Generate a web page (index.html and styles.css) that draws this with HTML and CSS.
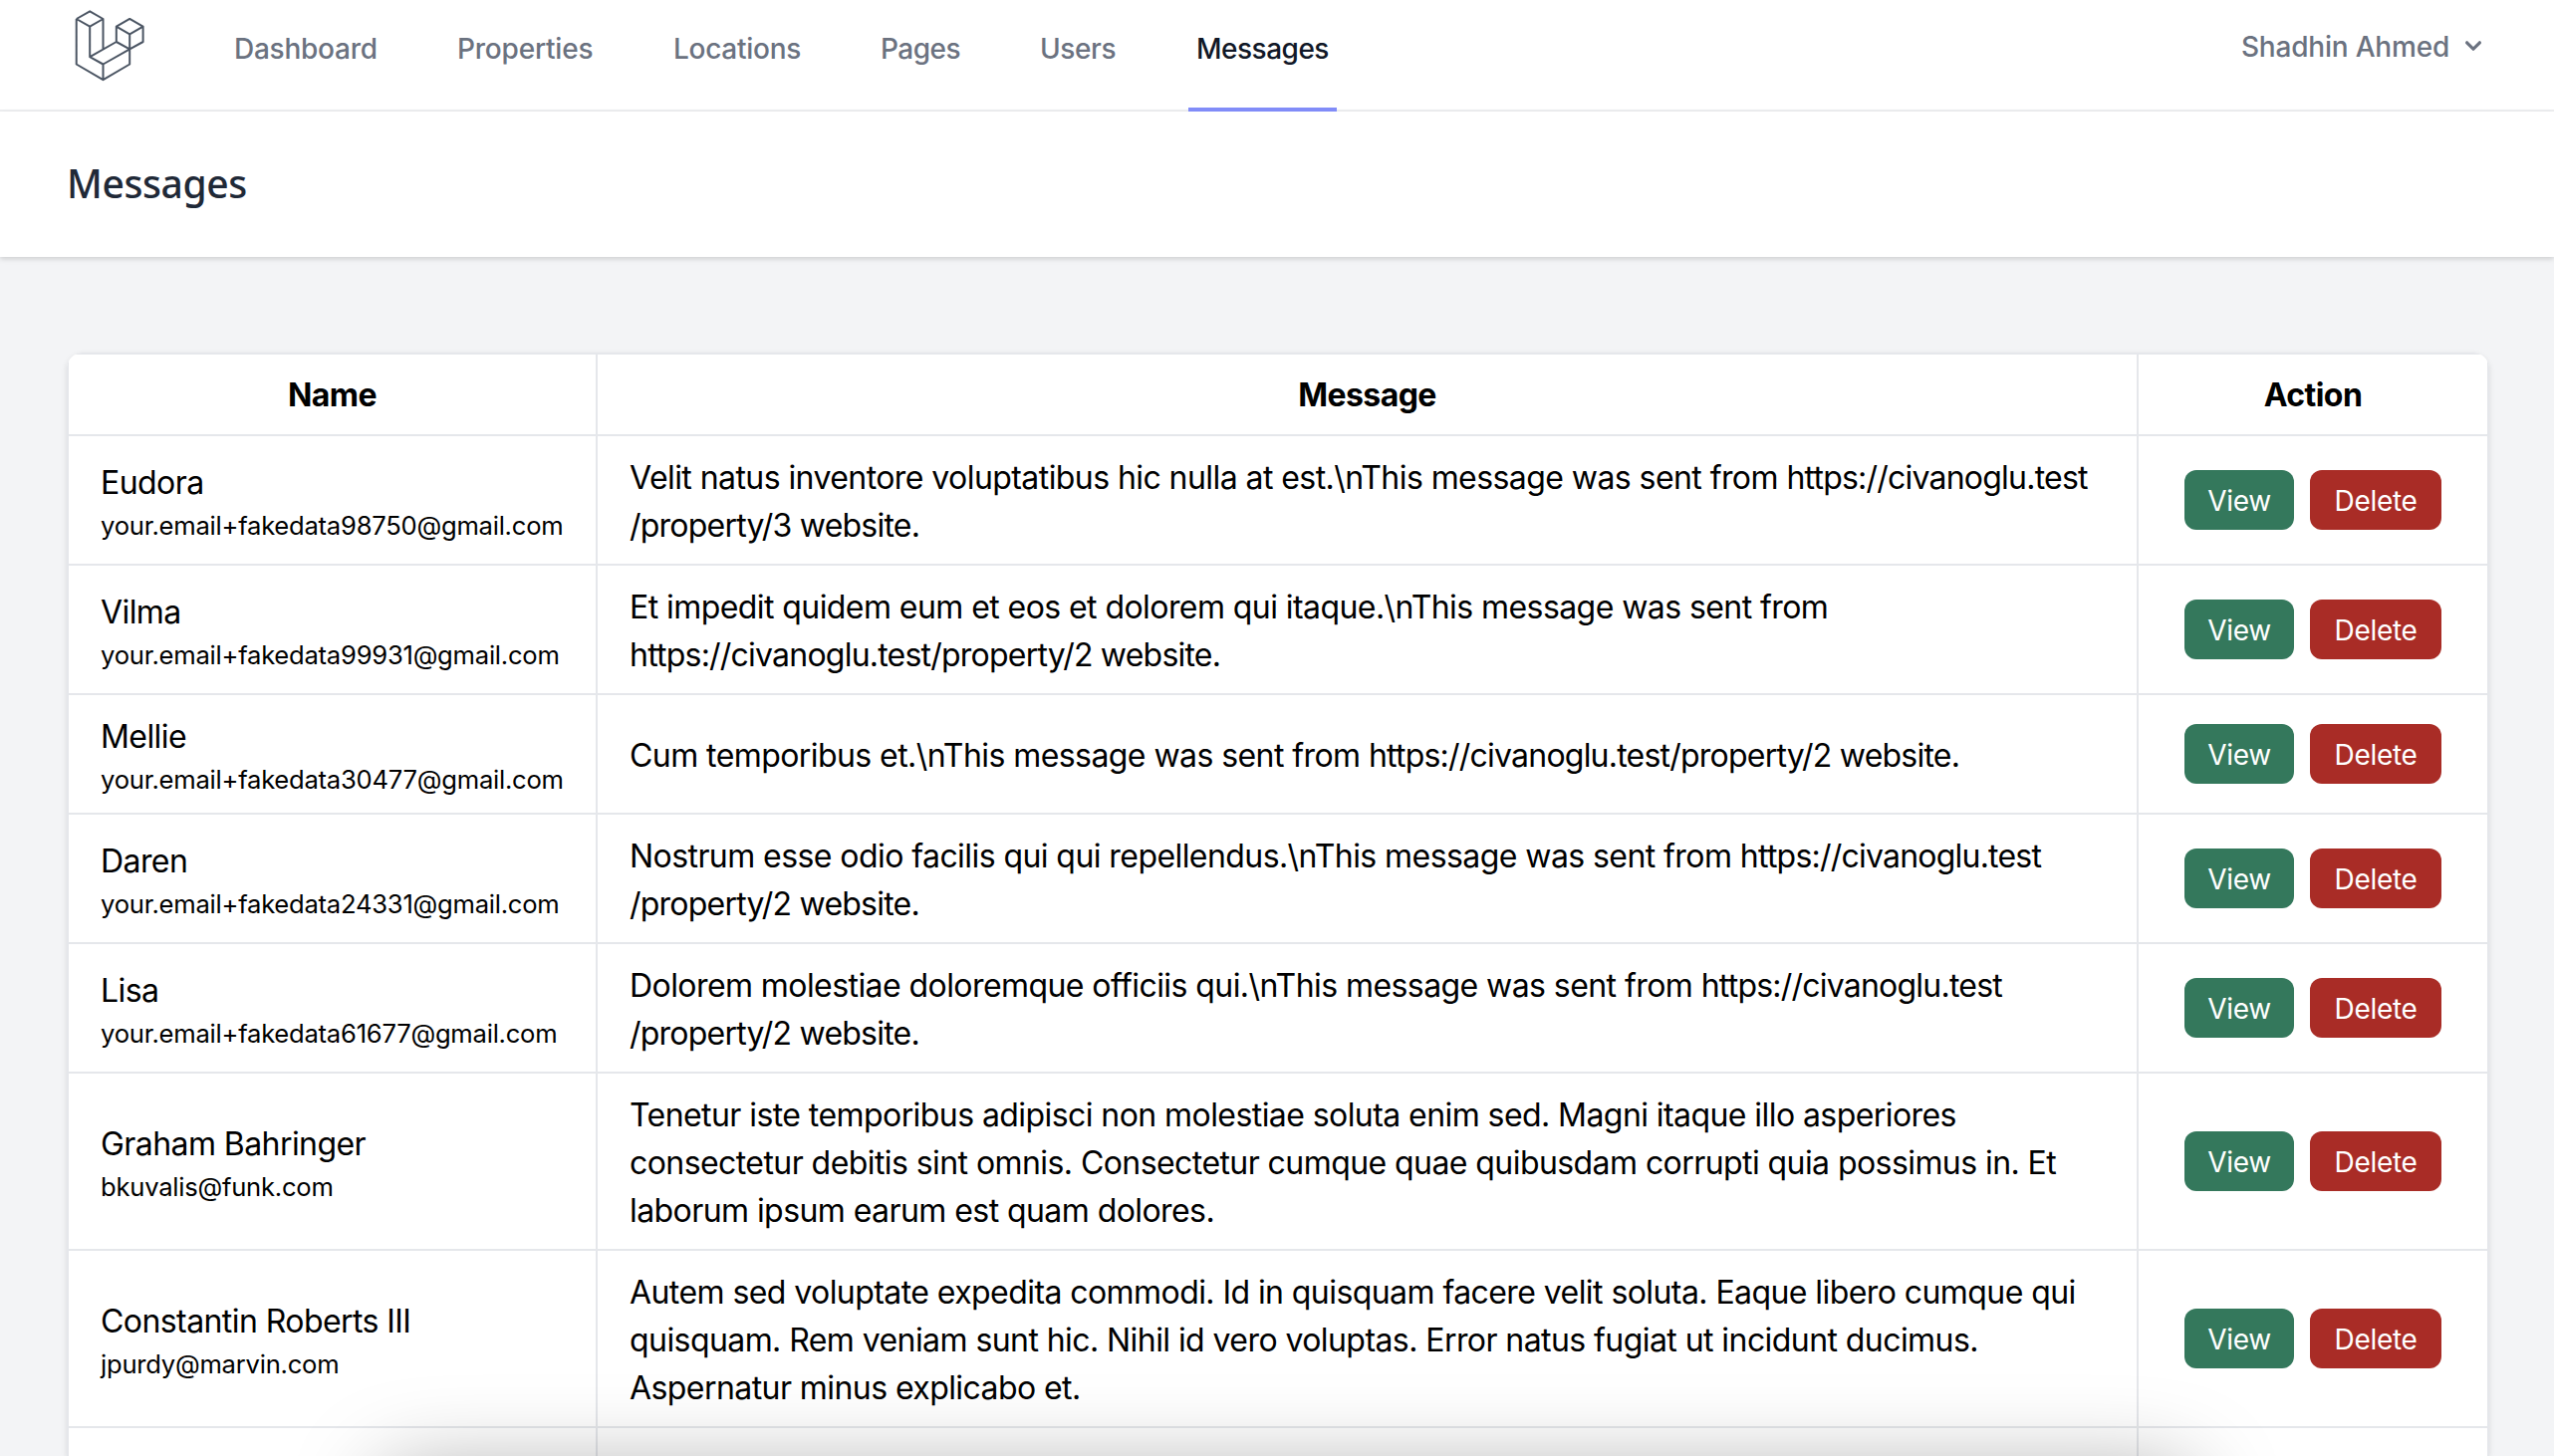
FILE: index.html
```html
<!DOCTYPE html>
<html lang="en">
<head>
<meta charset="utf-8">
<title>Messages</title>
<link rel="stylesheet" href="styles.css">
</head>
<body>
<nav class="nav">
  <a class="logo" href="#" aria-label="Home">
    <svg viewBox="0 0 72 72" fill="none" stroke="#4b5563" stroke-width="2" stroke-linejoin="round">
      <path d="M2.700 9 16.200 1.300 29.500 9V39.300M2.700 9V54.500L29.500 70.200 56.200 54.500V39.300M2.700 9 16.200 16.700 29.500 9M16.200 16.700V47.200L29.500 54.500 56.200 39.300 42.800 32 16.200 47.200M29.500 54.500V70.200M42.800 32V16.600L56.200 8.900 69.600 16.600V32L56.200 39.300V24.300L42.800 16.600M56.200 24.300 69.600 16.600"/>
    </svg>
  </a>
  <div class="links">
    <a class="link dashboard" href="#">Dashboard</a>
    <a class="link properties" href="#">Properties</a>
    <a class="link locations" href="#">Locations</a>
    <a class="link pages" href="#">Pages</a>
    <a class="link users" href="#">Users</a>
    <a class="link messages active" href="#">Messages</a>
  </div>
  <button class="user"><span>Shadhin Ahmed</span>
    <svg viewBox="0 0 20 20" fill="currentColor"><path fill-rule="evenodd" d="M5.293 7.293a1 1 0 011.414 0L10 10.586l3.293-3.293a1 1 0 111.414 1.414l-4 4a1 1 0 01-1.414 0l-4-4a1 1 0 010-1.414z" clip-rule="evenodd"/></svg>
  </button>
</nav>
<header class="header"><h2>Messages</h2></header>
<main class="main">
  <div class="card">
    <table class="table">
      <colgroup><col class="c-name"><col class="c-msg"><col class="c-act"></colgroup>
      <thead><tr><th>Name</th><th>Message</th><th>Action</th></tr></thead>
      <tbody>
        <tr><td><div class="name">Eudora</div><div class="email">your.email+fakedata98750@gmail.com</div></td>
          <td class="msg">Velit natus inventore voluptatibus hic nulla at est.\nThis message was sent from <span class="url">https://civanoglu.test<br>/property/3 website.</span></td>
          <td><div class="actions"><a class="btn view">View</a><a class="btn delete">Delete</a></div></td></tr>
        <tr><td><div class="name">Vilma</div><div class="email">your.email+fakedata99931@gmail.com</div></td>
          <td class="msg">Et impedit quidem eum et eos et dolorem qui itaque.\nThis message was sent from<br><span class="url">https://civanoglu.test/property/2 website.</span></td>
          <td><div class="actions"><a class="btn view">View</a><a class="btn delete">Delete</a></div></td></tr>
        <tr><td><div class="name">Mellie</div><div class="email">your.email+fakedata30477@gmail.com</div></td>
          <td class="msg">Cum temporibus et.\nThis message was sent from <span class="url">https://civanoglu.test/property/2 website.</span></td>
          <td><div class="actions"><a class="btn view">View</a><a class="btn delete">Delete</a></div></td></tr>
        <tr><td><div class="name">Daren</div><div class="email">your.email+fakedata24331@gmail.com</div></td>
          <td class="msg">Nostrum esse odio facilis qui qui repellendus.\nThis message was sent from <span class="url">https://civanoglu.test<br>/property/2 website.</span></td>
          <td><div class="actions"><a class="btn view">View</a><a class="btn delete">Delete</a></div></td></tr>
        <tr><td><div class="name">Lisa</div><div class="email">your.email+fakedata61677@gmail.com</div></td>
          <td class="msg">Dolorem molestiae doloremque officiis qui.\nThis message was sent from <span class="url">https://civanoglu.test<br>/property/2 website.</span></td>
          <td><div class="actions"><a class="btn view">View</a><a class="btn delete">Delete</a></div></td></tr>
        <tr><td><div class="name">Graham Bahringer</div><div class="email">bkuvalis@funk.com</div></td>
          <td class="msg">Tenetur iste temporibus adipisci non molestiae soluta enim sed. Magni itaque illo asperiores<br>consectetur debitis sint omnis. Consectetur cumque quae quibusdam corrupti quia possimus in. Et<br>laborum ipsum earum est quam dolores.</td>
          <td><div class="actions"><a class="btn view">View</a><a class="btn delete">Delete</a></div></td></tr>
        <tr><td><div class="name">Constantin Roberts III</div><div class="email">jpurdy@marvin.com</div></td>
          <td class="msg">Autem sed voluptate expedita commodi. Id in quisquam facere velit soluta. Eaque libero cumque qui<br>quisquam. Rem veniam sunt hic. Nihil id vero voluptas. Error natus fugiat ut incidunt ducimus.<br>Aspernatur minus explicabo et.</td>
          <td><div class="actions"><a class="btn view">View</a><a class="btn delete">Delete</a></div></td></tr>
        <tr class="next"><td></td><td></td><td></td></tr>
      </tbody>
    </table>
  </div>
</main>
<div class="window-shadow"></div>
</body>
</html>
```
FILE: styles.css
```css
* { box-sizing: border-box; }
html { overflow: hidden; }
body {
  margin: 0;
  height: 1462px;
  overflow: hidden;
  position: relative;
  background: #f3f4f6;
  color: #000;
  font: 32px/48px Inter, "Liberation Sans", sans-serif;
}
a { color: inherit; text-decoration: none; }
.nav {
  display: flex;
  height: 112px;
  padding: 0 65px 0 74px;
  background: #fff;
  border-bottom: 2px solid #eeeff1;
}
.logo { width: 72px; height: 72px; margin-top: 10px; }
.logo svg { display: block; width: 72px; height: 72px; }
.links { display: flex; gap: 64px; margin-left: 81px; height: 112px; }
.link {
  height: 112px;
  padding: 28px 0 0 8px;
  font-size: 28px;
  line-height: 43px;
  font-weight: 500;
  color: #6b7280;
  border-bottom: 4px solid transparent;
  white-space: nowrap;
}
.dashboard { width: 160px; letter-spacing: -.25px; }
.properties { width: 153px; letter-spacing: -.2px; }
.locations { width: 144px; letter-spacing: -.27px; }
.pages { width: 96px; letter-spacing: -.5px; }
.users { width: 93px; letter-spacing: -.4px; }
.messages { width: 149px; letter-spacing: -.5px; }
.link.active { color: #111827; border-color: #818cf8; }
.user {
  display: flex;
  align-items: center;
  gap: 8px;
  height: 40px;
  margin: 27px 0 0 auto;
  padding: 0;
  border: 0;
  background: none;
  color: #6b7280;
  font: 500 28px/40px Inter, "Liberation Sans", sans-serif;
  letter-spacing: -.2px;
}
.user svg { width: 32px; height: 32px; margin-top: -2px; }
.header {
  height: 146px;
  padding: 47px 67px;
  background: #fff;
  box-shadow: 0 2px 6px rgba(0,0,0,.1), 0 2px 4px rgba(0,0,0,.06);
}
.header h2 {
  margin: 0;
  font: 500 39px/50px "Noto Sans", "Open Sans", sans-serif;
  letter-spacing: -.4px;
  color: #1f2937;
}
.main { height: 1204px; padding: 96px 65px 0 67px; overflow: hidden; }
.card {
  height: 1108px;
  border-radius: 16px 16px 0 0;
  overflow: hidden;
  background: #fff;
  box-shadow: 0 2px 6px rgba(0,0,0,.1);
}
.table { width: 2432px; table-layout: fixed; border-collapse: collapse; }
.c-name { width: 531px; }
.c-msg { width: 1547px; }
.c-act { width: 352px; }
th, td {
  border: 2px solid #e5e7eb;
  padding: 18px 32px 14px;
  vertical-align: middle;
  text-align: left;
  letter-spacing: -.57px;
}
td:last-child { padding: 16px 32px; }
th { padding: 17px 32px 15px; text-align: center; font-weight: 700; }
.name { height: 48px; white-space: nowrap; }
.email { height: 38px; font-size: 25.6px; line-height: 38px; letter-spacing: -.24px; white-space: nowrap; }
.msg { white-space: nowrap; }
.url { letter-spacing: -.78px; }
.actions { display: flex; justify-content: center; gap: 16px; }
.btn {
  height: 60px;
  border-radius: 12px;
  color: #fff;
  font-size: 28px;
  line-height: 63px;
  letter-spacing: -.3px;
  text-align: center;
}
.view { width: 110px; background: #34785c; }
.delete { width: 132px; background: #a92c26; }
.next td { height: 120px; }
.window-shadow {
  position: absolute;
  left: 385px;
  right: 365px;
  top: 1480px;
  height: 400px;
  border-radius: 20px;
  box-shadow: 0 0 90px rgba(0,0,0,.36);
}
```
